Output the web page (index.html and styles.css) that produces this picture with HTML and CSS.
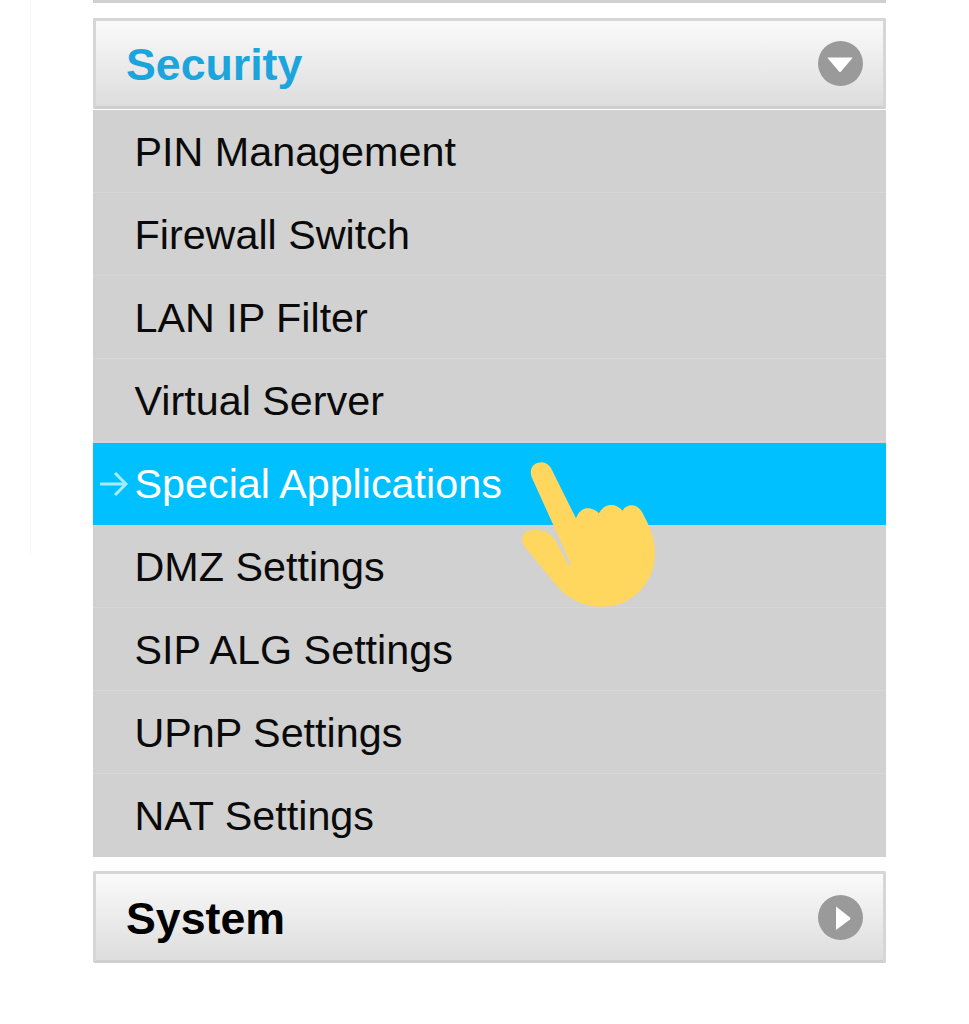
FILE: index.html
```html
<!DOCTYPE html>
<html lang="en">
<head>
    <meta charset="UTF-8">
    <meta name="viewport" content="width=device-width, initial-scale=1.0">
    <title>Security Menu</title>
    <link rel="stylesheet" href="styles.css">
</head>
<body>
    <div class="edge-line"></div>
    <div class="menu">
        <div class="menu-prev"></div>

        <div class="menu-header active">
            <span class="menu-title">Security</span>
            <svg class="menu-icon" viewBox="0 0 45 45">
                <circle cx="22.5" cy="22.5" r="22.5" fill="#9a9a9a"/>
                <path d="M10 16.5H34Q35 16.5 34 17.5L23 30.5Q22 31.5 21 30.5L10 17.5Q9 16.5 10 16.5Z" fill="#fff"/>
            </svg>
        </div>

        <ul class="submenu">
            <li>PIN Management</li>
            <li>Firewall Switch</li>
            <li>LAN IP Filter</li>
            <li>Virtual Server</li>
            <li class="selected">
                <svg class="arrow" viewBox="0 0 28 24">
                    <path d="M0 12H25M15 1L26 12L15 23" fill="none" stroke="#a6ecff" stroke-width="3"/>
                </svg>
                Special Applications
            </li>
            <li>DMZ Settings</li>
            <li>SIP ALG Settings</li>
            <li>UPnP Settings</li>
            <li>NAT Settings</li>
        </ul>

        <div class="menu-header closed">
            <span class="menu-title">System</span>
            <svg class="menu-icon" viewBox="0 0 45 45">
                <circle cx="22.5" cy="22.5" r="22.5" fill="#9a9a9a"/>
                <path d="M18 11.5L32 22.5Q33 23.5 32 24.5L18 35Z" fill="#fff"/>
            </svg>
        </div>
    </div>

    <!-- pointer hand over the selected row -->
    <svg class="hand" viewBox="0 0 540 540">
        <path fill="#ffd75e" d="M95 112C86 84 102 67 125 67C140 67 151 78 157 92L228 235C236 215 248 205 262 205C277 205 289 211 297 220C306 203 319 195 333 195C348 195 360 202 367 212C375 200 386 195 398 196C415 198 426 212 434 232C454 268 465 303 465 340C465 430 395 500 310 500C250 500 205 480 160 425L78 325C55 300 68 270 100 270C128 268 148 276 165 300L207 378L213 375L160 255Z"/>
    </svg>
</body>
</html>
```

FILE: styles.css
```css
:root {
    --border: #d0d0d0;
    --item: #d1d1d1;
    --item-line: #d7d7d7;
    --selected: #00c0ff;
    --blue: #1ba5dc;
}

body {
    font-family: 'Liberation Sans', Arial, sans-serif;
    color: #0a0a0a;
    background-color: #ffffff;
    margin: 0;
    height: 1024px;
    overflow: hidden;
    position: relative;
}

.edge-line {
    position: absolute;
    left: 30px;
    top: 0;
    width: 1px;
    height: 555px;
    background-color: #f8f8f8;
}

.menu {
    width: 793px;
    margin-left: 93px;
}

.menu-prev {
    height: 3px;
    margin-bottom: 15px;
    background-color: var(--border);
}

.menu-header {
    height: 91px;
    box-sizing: border-box;
    border: 3px solid #d6d6d6;
    border-bottom-color: #cfcfcf;
    border-radius: 2px;
    background: linear-gradient(#fafafa, #dddddd);
    display: flex;
    align-items: center;
    justify-content: space-between;
    padding: 3px 20px 0 30px;
}

.menu-header.closed {
    height: 92px;
}

.menu-title {
    font-size: 44.7px;
    font-weight: bold;
    color: #000000;
}

.menu-header.active .menu-title {
    color: var(--blue);
}

.menu-icon {
    width: 45px;
    height: 45px;
    margin-top: -3px;
    filter: blur(0.7px);
}

.submenu {
    list-style: none;
    margin: 1px 0 14px;
    padding: 0;
}

.submenu li {
    height: 83px;
    box-sizing: border-box;
    padding: 1px 0 0 41.5px;
    font-size: 41.3px;
    line-height: 83px;
    background-color: var(--item);
    border-bottom: 1px solid var(--item-line);
    position: relative;
}

.submenu li:last-child {
    border-bottom: none;
}

.submenu li.selected {
    background-color: var(--selected);
    box-shadow: inset 0 1px 0 var(--item);
    color: #ffffff;
    border-bottom: none;
}

.arrow {
    position: absolute;
    left: 7px;
    top: 30px;
    width: 28px;
    height: 24px;
    filter: blur(0.4px);
}

.hand {
    position: absolute;
    left: 500px;
    top: 440px;
    width: 180px;
    height: 180px;
}
```
